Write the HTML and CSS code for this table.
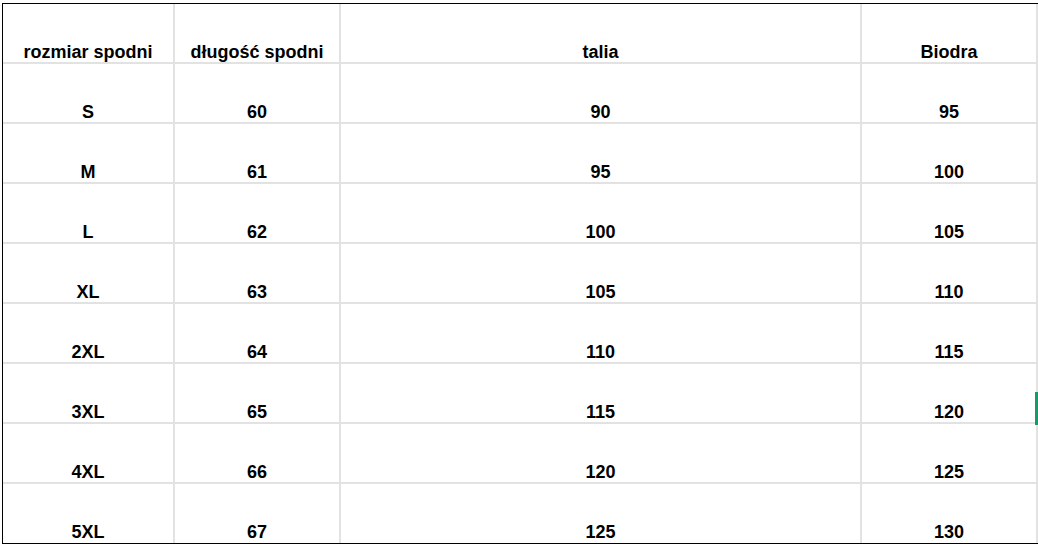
FILE: index.html
```html
<!DOCTYPE html>
<html lang="pl">
<head>
<meta charset="utf-8">
<title>Tabela rozmiarów</title>
<link rel="stylesheet" href="styles.css">
</head>
<body>
<div class="sheet">
  <div class="grid">
    <div class="cell">rozmiar spodni</div><div class="cell">długość spodni</div><div class="cell">talia</div><div class="cell">Biodra</div>
    <div class="cell">S</div><div class="cell">60</div><div class="cell">90</div><div class="cell">95</div>
    <div class="cell">M</div><div class="cell">61</div><div class="cell">95</div><div class="cell">100</div>
    <div class="cell">L</div><div class="cell">62</div><div class="cell">100</div><div class="cell">105</div>
    <div class="cell">XL</div><div class="cell">63</div><div class="cell">105</div><div class="cell">110</div>
    <div class="cell">2XL</div><div class="cell">64</div><div class="cell">110</div><div class="cell">115</div>
    <div class="cell">3XL</div><div class="cell">65</div><div class="cell">115</div><div class="cell">120</div>
    <div class="cell">4XL</div><div class="cell">66</div><div class="cell">120</div><div class="cell">125</div>
    <div class="cell last">5XL</div><div class="cell last">67</div><div class="cell last">125</div><div class="cell last">130</div>
  </div>
  <div class="marker"></div>
</div>
</body>
</html>
```

FILE: styles.css
```css
html, body {
  margin: 0;
  padding: 0;
  background: #ffffff;
}

body {
  font-family: "Liberation Sans", Arial, sans-serif;
  color: #000000;
}

.sheet {
  position: relative;
  width: 1038px;
  height: 545px;
  overflow: hidden;
  padding: 3px 0 0 2px;
  box-sizing: border-box;
}

.grid {
  display: grid;
  grid-template-columns: 172px 166px 521px 176px;
  grid-template-rows: repeat(8, 60px) 59px;
  width: 1035px;
  border-top: 1px solid #000000;
  border-left: 1px solid #000000;
  border-bottom: 1px solid #000000;
  box-sizing: content-box;
}

.cell {
  display: flex;
  align-items: flex-end;
  justify-content: center;
  border-right: 2px solid #e2e2e2;
  border-bottom: 2px solid #e2e2e2;
  font-size: 18px;
  font-weight: bold;
  line-height: 20px;
  padding-bottom: 0;
  white-space: nowrap;
}

.cell.last {
  border-bottom: none;
  padding-bottom: 1px;
}

.marker {
  position: absolute;
  left: 1035px;
  top: 392px;
  width: 3px;
  height: 33px;
  background: #1a9a6a;
}
```
